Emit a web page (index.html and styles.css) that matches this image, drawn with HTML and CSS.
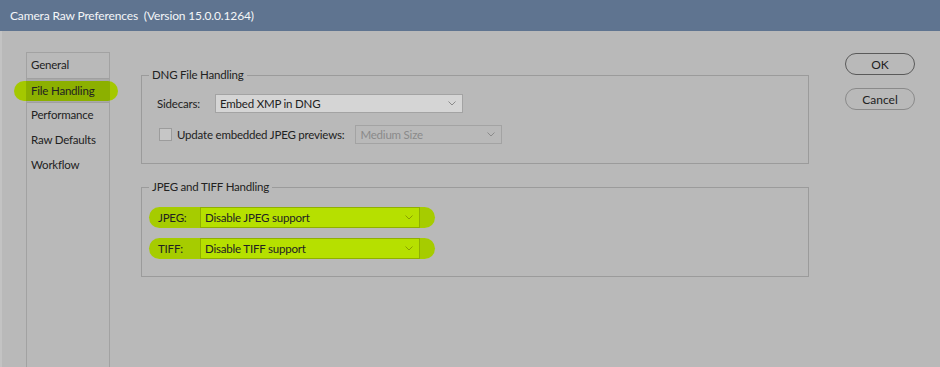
FILE: index.html
```html
<!DOCTYPE html>
<html lang="en">
<head>
  <meta charset="UTF-8">
  <meta name="viewport" content="width=device-width, initial-scale=1.0">
  <title>Camera Raw Preferences</title>
<link rel="stylesheet" href="styles.css">
</head>
<body>
<div class="window">
  <div class="titlebar">Camera Raw Preferences&nbsp; (Version 15.0.0.1264)</div>

  <div class="content">
    <ul class="nav">
      <li>General</li>
      <li class="selected">File Handling<span class="mark"></span></li>
      <li>Performance</li>
      <li>Raw Defaults</li>
      <li>Workflow</li>
    </ul>

    <div class="main">
      <fieldset class="group">
        <legend>DNG File Handling</legend>
        <div class="row">
          <span class="label sidecars">Sidecars:</span>
          <div class="select wide">
            <span>Embed XMP in DNG</span>
            <svg class="chev" width="8" height="5" viewBox="0 0 8 5"><polyline points="0.5,0.5 4,4 7.5,0.5" fill="none" stroke="#8a8a8a" stroke-width="1"/></svg>
          </div>
        </div>
        <div class="row gap">
          <span class="check"></span>
          <span class="label">Update embedded JPEG previews:</span>
          <div class="select disabled">
            <span>Medium Size</span>
            <svg class="chev" width="8" height="5" viewBox="0 0 8 5"><polyline points="0.5,0.5 4,4 7.5,0.5" fill="none" stroke="#8a8a8a" stroke-width="1"/></svg>
          </div>
        </div>
      </fieldset>

      <fieldset class="group second">
        <legend>JPEG and TIFF Handling</legend>
        <div class="row pill">
          <span class="label short">JPEG:</span>
          <div class="select green">
            <span>Disable JPEG support</span>
            <svg class="chev" width="8" height="5" viewBox="0 0 8 5"><polyline points="0.5,0.5 4,4 7.5,0.5" fill="none" stroke="#8aa000" stroke-width="1"/></svg>
          </div>
        </div>
        <div class="row pill gap2">
          <span class="label short">TIFF:</span>
          <div class="select green">
            <span>Disable TIFF support</span>
            <svg class="chev" width="8" height="5" viewBox="0 0 8 5"><polyline points="0.5,0.5 4,4 7.5,0.5" fill="none" stroke="#8aa000" stroke-width="1"/></svg>
          </div>
        </div>
      </fieldset>
    </div>

    <div class="buttons">
      <button class="btn ok">OK</button>
      <button class="btn cancel">Cancel</button>
    </div>
  </div>
</div>
</body>
</html>
```

FILE: styles.css
```css
* {
  box-sizing: border-box;
}

html, body {
  margin: 0;
  height: 100%;
}

body {
  font-family: Lato, "Noto Sans", sans-serif;
  font-size: 11.5px;
  letter-spacing: -0.2px;
  color: #222;
  background: #b9b9b9;
  overflow: hidden;
}

.window {
  display: flex;
  flex-direction: column;
  height: 100vh;
}

.titlebar {
  height: 31px;
  line-height: 31px;
  padding-left: 10px;
  background: #5f7490;
  color: #f4f6f8;
  font-size: 12px;
  letter-spacing: -0.15px;
  white-space: nowrap;
}

.content {
  flex: 1;
  display: flex;
  border-left: 2px solid #c3c3c3;
}

/* left list */
.nav {
  list-style: none;
  margin: 21px 0 0 24px;
  padding: 0;
  width: 84px;
  border-left: 1px solid #a2a2a2;
  border-right: 1px solid #a2a2a2;
  border-top: 1px solid #a2a2a2;
}

.nav li {
  position: relative;
  height: 25px;
  line-height: 24px;
  padding-left: 4px;
  white-space: nowrap;
}

.nav li.selected {
  isolation: isolate;
  background: #a9a9a9;
  border-top: 1px solid #a0a0a0;
  border-bottom: 1px solid #a0a0a0;
}

.mark {
  position: absolute;
  left: -13px;
  top: 2px;
  width: 104px;
  height: 20px;
  border-radius: 10px;
  background: linear-gradient(to right, #a4c800 0, #a4c800 12px, #8cb000 12px, #8cb000 96px, #a4c800 96px);
  z-index: -1;
}

/* middle column */
.main {
  width: 668px;
  margin-left: 31px;
  padding-top: 36px;
}

.group {
  margin: 0;
  padding: 11px 0 19px 7px;
  border: 1px solid #9b9b9b;
  min-width: 0;
}

.group legend {
  padding: 0 3px;
  line-height: 16px;
  white-space: nowrap;
}

.second {
  margin-top: 15px;
  padding-top: 12px;
  padding-bottom: 17px;
}

.row {
  display: flex;
  align-items: center;
  height: 19px;
  margin-left: 8px;
}

.row.gap {
  margin-top: 12px;
}

.label {
  white-space: nowrap;
}

.sidecars {
  width: 58px;
}

.check {
  width: 13px;
  height: 13px;
  margin: 0 5px 0 2px;
  background: #c6c6c6;
  border: 1px solid #9c9c9c;
}

.select {
  display: flex;
  align-items: center;
  justify-content: space-between;
  height: 19px;
  padding: 0 6px 0 4px;
  border: 1px solid #a3a3a3;
  white-space: nowrap;
}

.select.wide {
  width: 248px;
  background: #d5d5d5;
}

.select.disabled {
  width: 147px;
  margin-left: 11px;
  color: #8a8a8a;
}

/* highlighted rows */
.pill {
  height: 21px;
  width: 286px;
  margin-left: 0;
  padding: 0 15px 0 9px;
  border-radius: 11px;
  background: #a6cc00;
}

.pill.gap2 {
  margin-top: 10px;
}

.short {
  width: 42px;
}

.select.green {
  width: 220px;
  height: 21px;
  background: #b6e000;
  border-color: #90b000;
}

/* buttons */
.buttons {
  display: flex;
  flex-direction: column;
  gap: 13px;
  margin-left: 36px;
  padding-top: 22px;
}

.btn {
  width: 70px;
  height: 22px;
  padding: 0;
  font-family: inherit;
  font-size: 12px;
  color: #222;
  background: transparent;
  border-radius: 11px;
}

.ok {
  border: 1px solid #5a5a5a;
}

.cancel {
  border: 1px solid #8a8a8a;
}
```
